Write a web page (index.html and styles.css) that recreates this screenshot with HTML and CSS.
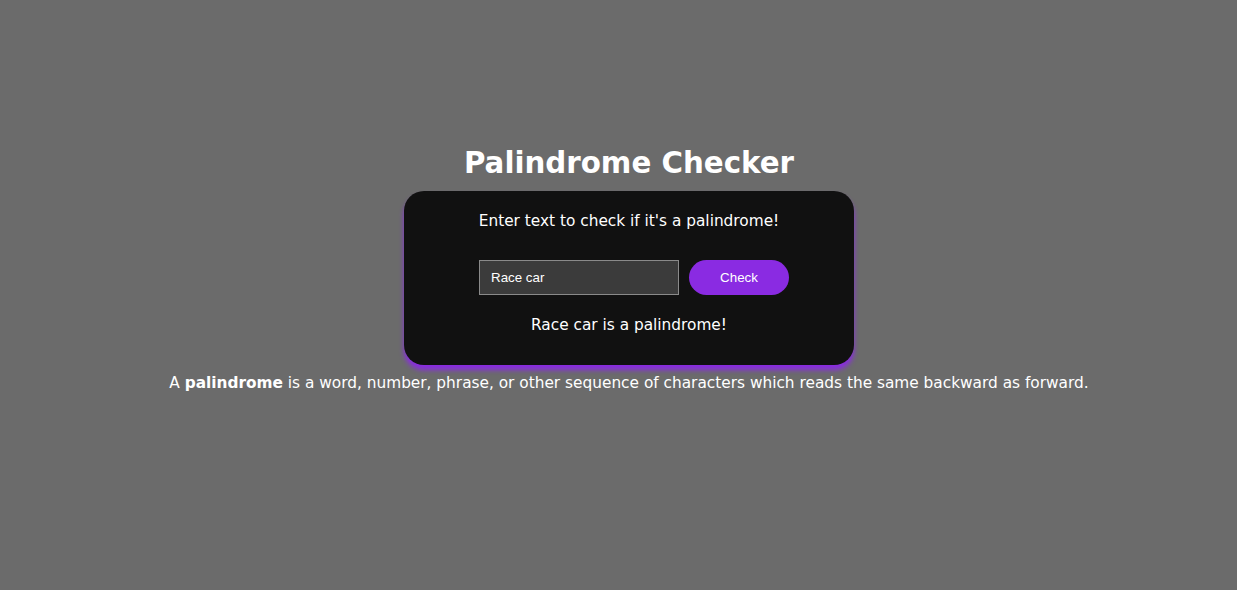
FILE: index.html
```html
<!DOCTYPE html>
<html lang="en">
<head>
<meta charset="utf-8">
<title>Palindrome Checker</title>
<link rel="stylesheet" href="styles.css">
</head>
<body>
<main class="page">
  <h1 class="title">Palindrome Checker</h1>
  <section class="card">
    <p class="prompt">Enter text to check if it's a palindrome!</p>
    <div class="row">
      <input class="text-input" type="text" value="Race car">
      <button class="check-btn" type="button">Check</button>
    </div>
    <p class="result">Race car is a palindrome!</p>
  </section>
  <p class="info">A <strong>palindrome</strong> is a word, number, phrase, or other sequence of characters which reads the same backward as forward.</p>
</main>
</body>
</html>
```

FILE: styles.css
```css
html, body {
  margin: 0;
  padding: 0;
}
body {
  background: #6b6b6b;
  color: #ffffff;
  font-family: "DejaVu Sans", sans-serif;
}
.page {
  display: flex;
  flex-direction: column;
  align-items: center;
  padding-top: 144px;
  padding-left: 21px;
}
.title {
  margin: 0;
  font-size: 29.3px;
  font-weight: bold;
  line-height: 38px;
  letter-spacing: 0;
}
.card {
  width: 450px;
  box-sizing: border-box;
  margin-top: 9px;
  background: #111111;
  border-radius: 20px;
  box-shadow: 0 5px 5px #8a2be2;
  padding: 19px 20px 28px;
  display: flex;
  flex-direction: column;
  align-items: center;
}
.prompt {
  margin: 0;
  font-size: 15.35px;
  line-height: 23px;
}
.row {
  display: flex;
  gap: 10px;
  margin-top: 27px;
  margin-left: 10px;
}
.text-input {
  width: 200px;
  height: 35px;
  box-sizing: border-box;
  background: #3b3b3b;
  border: 1px solid #8a8a8a;
  color: #ffffff;
  font-family: "Liberation Sans", Arial, sans-serif;
  font-size: 13.33px;
  padding: 0 11px;
  outline: none;
}
.check-btn {
  width: 100px;
  height: 35px;
  border: none;
  border-radius: 18px;
  background: #8a2be2;
  color: #ffffff;
  font-family: "Liberation Sans", Arial, sans-serif;
  font-size: 13.33px;
}
.result {
  margin: 19px 0 0;
  font-size: 15.35px;
  line-height: 23px;
}
.info {
  margin: 7px 0 0;
  font-size: 15.35px;
  line-height: 23px;
}
```
